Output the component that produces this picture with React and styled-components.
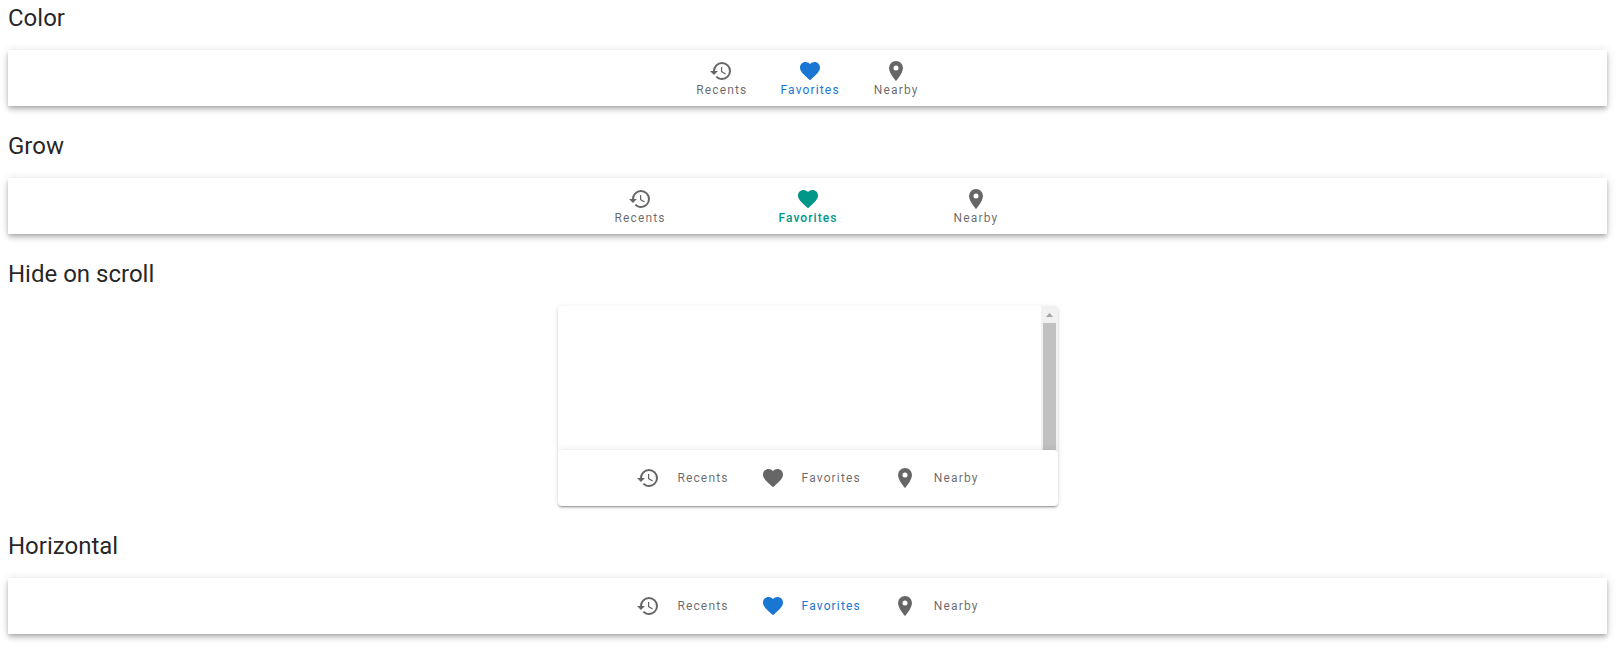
import React from "react";
import styled, { createGlobalStyle } from "styled-components";

const GlobalStyle = createGlobalStyle`
  *, *::before, *::after { box-sizing: border-box; }
  body {
    margin: 0;
    background: #fff;
    color: rgba(0, 0, 0, 0.87);
    font-family: Roboto, "Liberation Sans", sans-serif;
    overflow: hidden;
  }
`;

const Page = styled.main`
  display: flex;
  flex-direction: column;
  gap: 24px;
  padding: 2px 9px 22px 8px;
`;

const Section = styled.section`
  display: flex;
  flex-direction: column;
  gap: 16px;
`;

const Heading = styled.h2`
  margin: 0;
  font-size: 24px;
  font-weight: 400;
  line-height: 32px;
`;

const BottomNav = styled.nav`
  position: relative;
  display: flex;
  flex: none;
  justify-content: center;
  height: 56px;
  border-radius: ${(p) => (p.$rounded ? "4px" : "0")};
  background: #fff;
  box-shadow: 0 2px 4px -1px rgba(0, 0, 0, 0.2), 0 4px 5px 0 rgba(0, 0, 0, 0.14),
    0 1px 10px 0 rgba(0, 0, 0, 0.12);
`;

const NavButton = styled.button`
  display: flex;
  flex-direction: ${(p) => (p.$horizontal ? "row" : "column")};
  flex: ${(p) => (p.$grow ? "1 1 auto" : "0 1 auto")};
  align-items: center;
  justify-content: center;
  gap: ${(p) => (p.$horizontal ? "16px" : "0")};
  min-width: 80px;
  max-width: 168px;
  width: ${(p) => (p.$grow ? "168px" : "auto")};
  height: 100%;
  padding: 0 16px;
  border: 0;
  background: transparent;
  color: ${(p) => p.$color || "rgba(0, 0, 0, 0.6)"};
  font: ${(p) => (p.$bold ? 500 : 400)} 12px/14px Roboto, "Liberation Sans", sans-serif;
  letter-spacing: ${(p) => (p.$bold ? "1.07px" : "1.15px")};
  white-space: nowrap;
`;

const Label = styled.span`
  padding-left: 1px;
`;

const Icon = styled.svg`
  display: block;
  flex: none;
  width: 24px;
  height: 24px;
  fill: currentColor;
`;

const Card = styled.div`
  display: flex;
  flex-direction: column;
  align-self: center;
  width: 500px;
  height: 200px;
  overflow: hidden;
  border-radius: 4px;
  background: #fff;
  box-shadow: 0 3px 1px -2px rgba(0, 0, 0, 0.2), 0 2px 2px 0 rgba(0, 0, 0, 0.14),
    0 1px 5px 0 rgba(0, 0, 0, 0.12);
`;

const ScrollArea = styled.div`
  display: flex;
  flex: 1;
  justify-content: flex-end;
  min-height: 0;
  margin-bottom: -4px;
`;

const ScrollTrack = styled.div`
  display: flex;
  flex-direction: column;
  width: 17px;
  padding: 0 2px;
  background: #f1f1f1;
`;

const ScrollArrow = styled.svg`
  display: block;
  flex: none;
  width: 13px;
  height: 17px;
  fill: #a3a3a3;
`;

const ScrollThumb = styled.div`
  flex: 1;
  background: #c1c1c1;
`;

const items = [
  {
    label: "Recents",
    path: "M13.2,8H12V12.9L16.3,15.5L16.9,14.5L13.2,12.3V8M13,3A9,9 0 0,0 4,12H1L4.96,16.03L9,12H6A7,7 0 0,1 13,5A7,7 0 0,1 20,12A7,7 0 0,1 13,19C11.07,19 9.32,18.21 8.06,16.94L6.64,18.36C8.27,20 10.5,21 13,21A9,9 0 0,0 22,12A9,9 0 0,0 13,3",
  },
  {
    label: "Favorites",
    path: "M12,21.35L10.55,20.03C5.4,15.36 2,12.27 2,8.5C2,5.41 4.42,3 7.5,3C9.24,3 10.91,3.81 12,5.08C13.09,3.81 14.76,3 16.5,3C19.58,3 22,5.41 22,8.5C22,12.27 18.6,15.36 13.45,20.03L12,21.35Z",
  },
  {
    label: "Nearby",
    path: "M12,11.5A2.5,2.5 0 0,1 9.5,9A2.5,2.5 0 0,1 12,6.5A2.5,2.5 0 0,1 14.5,9A2.5,2.5 0 0,1 12,11.5M12,2A7,7 0 0,0 5,9C5,14.25 12,22 12,22C12,22 19,14.25 19,9A7,7 0 0,0 12,2Z",
  },
];

function Navigation({ active, color, bold, grow, horizontal, rounded }) {
  return (
    <BottomNav $rounded={rounded}>
      {items.map(({ label, path }) => (
        <NavButton
          key={label}
          type="button"
          $grow={grow}
          $horizontal={horizontal}
          $bold={bold && label === active}
          $color={label === active ? color : undefined}
        >
          <Icon viewBox="0 0 24 24" aria-hidden="true">
            <path d={path} />
          </Icon>
          <Label>{label}</Label>
        </NavButton>
      ))}
    </BottomNav>
  );
}

export default function App() {
  return (
    <>
      <GlobalStyle />
      <Page>
        <Section>
          <Heading>Color</Heading>
          <Navigation active="Favorites" color="#1976d2" />
        </Section>
        <Section>
          <Heading>Grow</Heading>
          <Navigation active="Favorites" color="#009688" bold grow />
        </Section>
        <Section>
          <Heading>Hide on scroll</Heading>
          <Card>
            <ScrollArea>
              <ScrollTrack>
                <ScrollArrow viewBox="0 0 13 17" aria-hidden="true">
                  <path d="M3 11L6.5 7L10 11Z" />
                </ScrollArrow>
                <ScrollThumb />
              </ScrollTrack>
            </ScrollArea>
            <Navigation horizontal rounded />
          </Card>
        </Section>
        <Section>
          <Heading>Horizontal</Heading>
          <Navigation active="Favorites" color="#1976d2" horizontal />
        </Section>
      </Page>
    </>
  );
}
